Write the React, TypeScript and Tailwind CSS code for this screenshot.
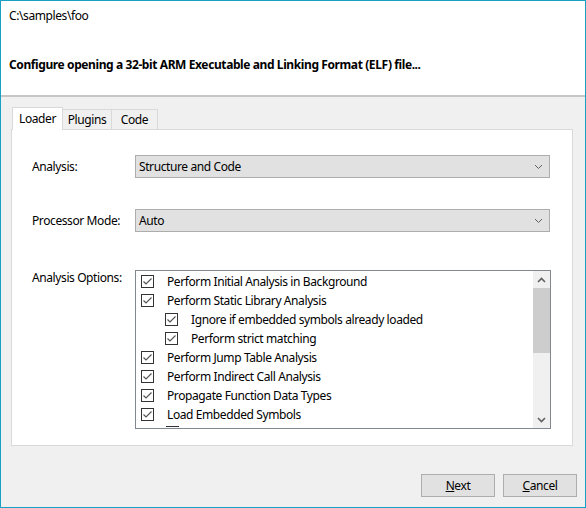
import type { ReactNode } from "react";

const options = [
  { label: "Perform Initial Analysis in Background", indent: false },
  { label: "Perform Static Library Analysis", indent: false },
  { label: "Ignore if embedded symbols already loaded", indent: true },
  { label: "Perform strict matching", indent: true },
  { label: "Perform Jump Table Analysis", indent: false },
  { label: "Perform Indirect Call Analysis", indent: false },
  { label: "Propagate Function Data Types", indent: false },
  { label: "Load Embedded Symbols", indent: false },
];

function CheckBox() {
  return (
    <svg width="13" height="13" viewBox="0 0 13 13" className="shrink-0">
      <rect x="0.5" y="0.5" width="12" height="12" fill="#fff" stroke="#333" />
      <path d="M2.5 6.5 L5 9 L10.5 3.5" fill="none" stroke="#555" strokeWidth="1.2" />
    </svg>
  );
}

function Chevron({ bold = false, up = false }: { bold?: boolean; up?: boolean }) {
  return (
    <svg width="9" height="6" viewBox="0 0 9 6">
      <path
        d={up ? "M1 5 L4.5 1.5 L8 5" : "M1 1 L4.5 4.5 L8 1"}
        fill="none"
        stroke="#606060"
        strokeWidth={bold ? 1.6 : 1}
      />
    </svg>
  );
}

function Combo({ value }: { value: string }) {
  return (
    <div className="flex h-[23px] w-[415px] items-center justify-between border border-[#adadad] bg-[#e1e1e1] pl-[3px] pr-[6px]">
      <span>{value}</span>
      <Chevron />
    </div>
  );
}

function Row({ label, children, className }: { label: string; children: ReactNode; className?: string }) {
  return (
    <div className={"flex " + (className ?? "")}>
      <div className="w-[103px] shrink-0">{label}</div>
      {children}
    </div>
  );
}

export default function App() {
  return (
    <div
      className="flex h-[508px] w-[586px] flex-col border border-[#17a1c4] bg-[#f0f0f0] text-[12px] leading-[16px] tracking-[-0.4px] text-black"
      style={{ fontFamily: '"Noto Sans", "Open Sans", sans-serif' }}
    >
      <div className="h-[96px] shrink-0 border-b-2 border-[#c6c6c6] bg-white pl-[8px]">
        <p className="pt-[7px]">C:\samples\foo</p>
        <p className="mt-[33px] font-bold">Configure opening a 32-bit ARM Executable and Linking Format (ELF) file...</p>
      </div>

      <div className="ml-[10px] mr-[12px] mt-[9px]">
        <div className="flex h-[23px] items-end pl-px">
          <div className="relative z-10 -mb-px flex h-[23px] w-[51px] items-start justify-center border border-b-0 border-[#d9d9d9] bg-white pt-[3px]">
            Loader
          </div>
          <div className="flex h-[20px] w-[49px] items-center justify-center border border-l-0 border-b-0 border-[#d9d9d9] bg-[#f0f0f0]">
            Plugins
          </div>
          <div className="flex h-[20px] w-[46px] items-center justify-center border border-l-0 border-b-0 border-[#d9d9d9] bg-[#f0f0f0]">
            Code
          </div>
        </div>

        <div className="h-[317px] border border-[#d9d9d9] bg-white pl-[20px] pt-[25px]">
          <Row label="Analysis:" className="items-center">
            <Combo value="Structure and Code" />
          </Row>
          <Row label="Processor Mode:" className="mt-[31px] items-center">
            <Combo value="Auto" />
          </Row>
          <Row label="Analysis Options:" className="mt-[38px] items-start">
            <div className="flex h-[159px] w-[416px] border border-[#828790] bg-white">
              <div className="flex-1 overflow-hidden pl-[5px] pt-[1px]">
                {options.map((o) => (
                  <div key={o.label} className={"flex h-[19px] items-center gap-[13px] " + (o.indent ? "pl-[24px]" : "")}>
                    <CheckBox />
                    <span className="whitespace-nowrap">{o.label}</span>
                  </div>
                ))}
                <div className="ml-[25px] mt-[2px] h-px w-[13px] bg-[#333]" />
              </div>
              <div className="flex w-[17px] flex-col bg-[#f0f0f0]">
                <div className="flex h-[17px] items-center justify-center">
                  <Chevron up bold />
                </div>
                <div className="h-[65px] bg-[#cdcdcd]" />
                <div className="flex-1" />
                <div className="flex h-[17px] items-center justify-center">
                  <Chevron bold />
                </div>
              </div>
            </div>
          </Row>
        </div>
      </div>

      <div className="mr-[8px] mt-[28px] flex justify-end gap-[8px]">
        <button className="h-[23px] w-[74px] border border-[#adadad] bg-[#e1e1e1]">
          <span className="underline">N</span>ext
        </button>
        <button className="h-[23px] w-[74px] border border-[#adadad] bg-[#e1e1e1]">
          <span className="underline">C</span>ancel
        </button>
      </div>
    </div>
  );
}
